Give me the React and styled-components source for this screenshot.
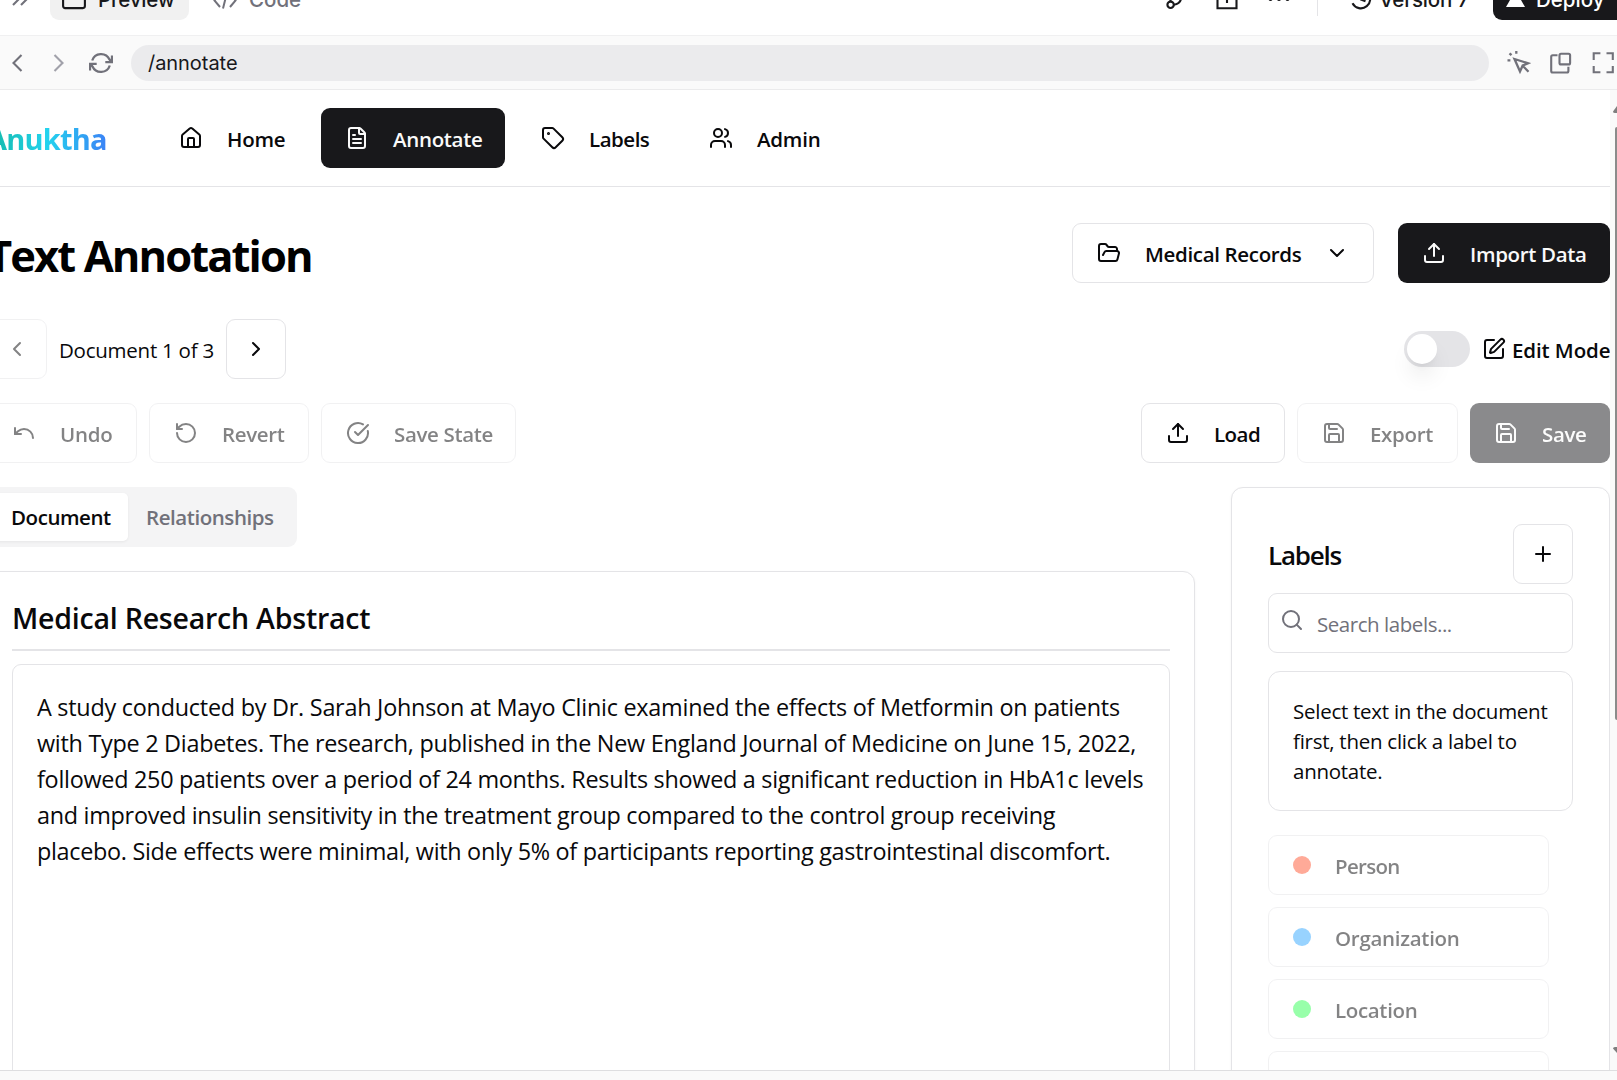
import React from "react";
import styled, { createGlobalStyle, css } from "styled-components";
import {
  House, FileText, Tag, Users, FolderOpen, ChevronDown, Upload, ChevronLeft, ChevronRight,
  SquarePen, Undo, RotateCcw, CircleCheckBig, Save, Plus, Search,
} from "lucide-react";

const ui = `"Open Sans", "Noto Sans", sans-serif`;
const chrome = `Inter, "Liberation Sans", sans-serif`;

const Global = createGlobalStyle`
  *, *::before, *::after { box-sizing: border-box; }
  body { margin: 0; background: #fff; color: #09090b; font-family: ${ui}; }
  button, input { font: inherit; color: inherit; margin: 0; }
  svg { display: block; flex: none; }
  h1, h2, h3, p { margin: 0; }
`;

const Window = styled.div`
  width: 1617px;
  height: 1080px;
  overflow: hidden;
  display: flex;
  flex-direction: column;
`;

/* Editor chrome */
const TopBar = styled.header`
  height: 36px;
  flex: none;
  overflow: hidden;
  border-bottom: 1px solid #f0f0f1;
  font-family: ${chrome};
`;
const TopBarInner = styled.div`
  height: 36px;
  margin-top: -16px;
  width: 1629px;
  padding-left: 5px;
  display: flex;
  align-items: center;
  font-size: 20.5px;
  font-weight: 500;
  color: #18181b;
`;
const ChromeText = styled.span`
  padding-bottom: 5px;
`;
const ViewTab = styled.div`
  height: 36px;
  width: ${(p) => p.$w}px;
  padding-left: ${(p) => p.$pad}px;
  display: flex;
  align-items: center;
  gap: 12px;
  border-radius: 9px;
  letter-spacing: ${(p) => p.$ls}px;
  background: ${(p) => (p.$on ? "#f1f1f1" : "transparent")};
  color: ${(p) => (p.$on ? "#18181b" : "#71717a")};
`;
const TopActions = styled.div`
  margin-left: auto;
  display: flex;
  align-items: center;
`;
const Action = styled.span`
  display: flex;
  width: ${(p) => p.$w}px;
  color: ${(p) => p.$color || "inherit"};
`;
const Rule = styled.span`
  width: 1px;
  height: 27px;
  background: #e4e4e7;
  margin-right: 31px;
`;
const Version = styled.span`
  display: flex;
  align-items: center;
  gap: 6px;
  width: 144px;
  letter-spacing: -0.15px;
`;
const Deploy = styled.button`
  width: 136px;
  height: 36px;
  padding: 0 0 0 12px;
  border: 0;
  border-radius: 9px;
  background: #18181b;
  color: #fff;
  display: flex;
  align-items: center;
  gap: 10px;
`;
const AddressBar = styled.div`
  height: 54px;
  flex: none;
  padding: 0 2px 0 5px;
  background: #fafafa;
  border-bottom: 1px solid #ebebec;
  display: flex;
  align-items: center;
  gap: 18px;
  color: #71717a;
`;
const Address = styled.div`
  width: 1358px;
  height: 36px;
  border-radius: 18px;
  padding-left: 17px;
  background: #ebebed;
  color: #18181b;
  font: 400 20px/36px ${chrome};
  letter-spacing: -0.05px;
`;

/* Previewed page */
const Viewport = styled.div`
  flex: 1;
  min-height: 0;
  display: flex;
`;
const Page = styled.div`
  width: 1610px;
  overflow: hidden;
  flex: none;
`;
const Track = styled.div`
  flex: 1;
  background: #fafafa;
  display: flex;
  flex-direction: column;
  align-items: flex-end;
  padding: 16px 0;
  overflow: hidden;
`;
const Thumb = styled.div`
  width: 2px;
  height: 593px;
  margin: 13px 0 auto;
  border-radius: 3px 0 0 3px;
  background: #8b8b8b;
`;
const NavBar = styled.nav`
  height: 97px;
  border-bottom: 1px solid #e4e4e7;
  display: flex;
  align-items: center;
`;
const Brand = styled.div`
  width: 168px;
  margin-left: -13px;
  padding-top: 1px;
  font-size: 29px;
  font-weight: 700;
  line-height: 42px;
  letter-spacing: -0.8px;
  & > span {
    background: linear-gradient(90deg, #14b8a6, #22d3ee 50%, #3b82f6);
    -webkit-background-clip: text;
    background-clip: text;
    color: transparent;
  }
`;
const Cluster = styled.div`
  display: flex;
  align-items: center;
  gap: ${(p) => p.$gap ?? 12}px;
`;
const Button = styled.button`
  height: 60px;
  width: ${(p) => p.$w}px;
  flex: none;
  padding: 0 0 0 ${(p) => (p.$kind === "outline" ? 24 : 23)}px;
  display: flex;
  align-items: center;
  gap: 24px;
  border: 1px solid transparent;
  border-radius: 9px;
  background: #fff;
  font-size: 20.5px;
  font-weight: 560;
  line-height: 30px;
  white-space: nowrap;
  opacity: ${(p) => (p.$dim ? 0.5 : 1)};
  ${(p) => p.$kind === "outline" && css`border-color: #e4e4e7;`}
  ${(p) => p.$kind === "solid" && css`background: #18181b; color: #fafafa;`}
  ${(p) => p.$square && css`padding: 0; justify-content: center;`}
`;
const Text = styled.span`
  padding-top: 1px;
  letter-spacing: ${(p) => (p.$ls || 0) - 0.34}px;
`;
const Main = styled.main`
  margin-left: -13px;
  width: 1623px;
  padding-top: 36px;
`;
const Row = styled.div`
  height: 60px;
  margin-bottom: ${(p) => p.$mb}px;
  display: flex;
  align-items: center;
  justify-content: space-between;
`;
const Title = styled.h1`
  font-size: 43.5px;
  font-weight: 700;
  line-height: 60px;
  letter-spacing: -1.9px;
  padding-top: 6px;
  white-space: nowrap;
  color: #000;
`;
const Plain = styled.span`
  font-size: 20.5px;
  line-height: 30px;
  padding-top: 1px;
  font-weight: ${(p) => p.$weight || 400};
  letter-spacing: ${(p) => p.$ls}px;
  width: ${(p) => p.$w}px;
  white-space: nowrap;
`;
const Switch = styled.div`
  width: 66px;
  height: 36px;
  border-radius: 18px;
  padding: 3px;
  background: #e4e4e7;
  margin-right: 12px;
  &::after {
    content: "";
    display: block;
    width: 30px;
    height: 30px;
    border-radius: 50%;
    background: #fff;
    box-shadow: 0 15px 22px -4px rgba(0, 0, 0, 0.1), 0 6px 9px -6px rgba(0, 0, 0, 0.1);
  }
`;
const EditLabel = styled.div`
  display: flex;
  align-items: center;
  gap: 6px;
`;
const Columns = styled.div`
  display: flex;
  gap: 36px;
  align-items: flex-start;
`;
const DocColumn = styled.section`
  width: 1208px;
`;
const Tabs = styled.div`
  width: 310px;
  height: 60px;
  padding: 6px;
  display: flex;
  border-radius: 9px;
  background: #f4f4f5;
  margin-bottom: 24px;
`;
const Tab = styled.div`
  height: 48px;
  padding: 6px 0 0 18px;
  width: ${(p) => (p.$on ? 135 : 163)}px;
  border-radius: 5px;
  font-size: 20.5px;
  line-height: 36px;
  font-weight: 560;
  letter-spacing: -0.44px;
  ${(p) => (p.$on
    ? css`background: #fff; color: #09090b; box-shadow: 0 1px 3px rgba(0, 0, 0, 0.06);`
    : css`color: #71717a;`)}
`;
const Card = styled.div`
  height: 720px;
  padding: ${(p) => p.$pad};
  border: 1px solid #e4e4e7;
  border-radius: 12px;
  background: #fff;
  box-shadow: 0 1px 3px rgba(0, 0, 0, 0.05);
`;
const DocTitle = styled.h2`
  height: 54px;
  font-size: 28.5px;
  font-weight: 600;
  line-height: 42px;
  letter-spacing: -0.22px;
  border-bottom: 2px solid #e4e4e7;
  margin-bottom: 13px;
`;
const DocBody = styled.div`
  height: 620px;
  padding: 24px;
  border: 1px solid #e4e4e7;
  border-radius: 9px;
`;
const Line = styled.p`
  font-size: 23.4px;
  line-height: 36px;
  white-space: nowrap;
  letter-spacing: ${(p) => p.$ls}px;
`;
const Side = styled.aside`
  width: 379px;
`;
const SideHead = styled.div`
  height: 60px;
  display: flex;
  justify-content: space-between;
  align-items: center;
  margin-bottom: 9px;
`;
const SideTitle = styled.h3`
  font-size: 26px;
  font-weight: 600;
  letter-spacing: -1.25px;
  line-height: 36px;
  padding-top: 1px;
`;
const SearchBox = styled.label`
  height: 60px;
  padding: 0 0 0 11px;
  display: flex;
  align-items: center;
  gap: 13px;
  border: 1px solid #e4e4e7;
  border-radius: 9px;
  color: #71717a;
  margin-bottom: 18px;
  & > svg { margin-bottom: 6px; }
`;
const SearchInput = styled.input`
  width: 220px;
  border: 0;
  padding: 1px 0 0;
  outline: none;
  background: transparent;
  font-size: 20.5px;
  line-height: 30px;
  letter-spacing: -0.45px;
  &::placeholder { color: #71717a; opacity: 1; }
`;
const Notice = styled.div`
  height: 140px;
  padding: 24px 0 0 24px;
  border: 1px solid #e4e4e7;
  border-radius: 12px;
  font-size: 20.5px;
  line-height: 30px;
  letter-spacing: -0.26px;
  margin-bottom: 24px;
`;
const LabelList = styled.div`
  display: flex;
  flex-direction: column;
  gap: 12px;
`;
const Dot = styled.span`
  width: 18px;
  height: 18px;
  border-radius: 50%;
  background: ${(p) => p.$c};
`;
const Footer = styled.footer`
  height: 10px;
  flex: none;
  border-top: 1px solid #dedee0;
  background: #fafafa;
`;

const Glyph = ({ w = 24, children, sw = 2.1, ...rest }) => (
  <svg width={w} height="24" viewBox={`0 0 ${w} 24`} fill="none" stroke="currentColor" strokeWidth={sw} {...rest}>
    {children}
  </svg>
);

const navItems = [
  { name: "Home", icon: House, w: 154, ls: 0.1 },
  { name: "Annotate", icon: FileText, w: 184, ls: 0.02, on: true },
  { name: "Labels", icon: Tag, w: 156, ls: -0.15 },
  { name: "Admin", icon: Users, w: 159, ls: 0.1 },
];

const lines = [
  ["A study conducted by Dr. Sarah Johnson at Mayo Clinic examined the effects of Metformin on patients", -0.248],
  ["with Type 2 Diabetes. The research, published in the New England Journal of Medicine on June 15, 2022,", -0.27],
  ["followed 250 patients over a period of 24 months. Results showed a significant reduction in HbA1c levels", -0.278],
  ["and improved insulin sensitivity in the treatment group compared to the control group receiving", -0.284],
  ["placebo. Side effects were minimal, with only 5% of participants reporting gastrointestinal discomfort.", -0.302],
];

const labels = [
  { name: "Person", c: "#ff5733", ls: -0.35 },
  { name: "Organization", c: "#33a8ff", ls: 0.05 },
  { name: "Location", c: "#33ff57", ls: 0 },
  { name: "", c: "transparent", ls: 0 },
];

function EditorChrome() {
  return (
    <>
      <TopBar>
        <TopBarInner>
          <Action $w={45} $color="#71717a">
            <Glyph><path d="M8 15l8-8M16 15l8-8" /></Glyph>
          </Action>
          <ViewTab $on $w={139} $pad={12} $ls={-0.2}>
            <Glyph><rect x="1.1" y="2" width="21.8" height="16.1" rx="2" /></Glyph>
            <ChromeText>Preview</ChromeText>
          </ViewTab>
          <ViewTab $w={130} $pad={24} $ls={0}>
            <Glyph sw={2}><path d="M7 4 1.500 10.500 7 17M17 4l5.500 6.500L17 17M14 2.500l-4 16" /></Glyph>
            <ChromeText>Code</ChromeText>
          </ViewTab>
          <TopActions>
            <Action $w={51}>
              <Glyph><circle cx="6.600" cy="14.800" r="3.200" /><circle cx="17" cy="5" r="3.200" /><path d="M6.500 11.500V2M9.800 14.700q7.200-1 7.200-7" /></Glyph>
            </Action>
            <Action $w={52}>
              <Glyph><path d="M7 5H2.500v13.200h19V5H17M12 13V1" /></Glyph>
            </Action>
            <Action $w={50}>
              <Glyph><g fill="currentColor" stroke="none"><circle cx="3.500" cy="9" r="2" /><circle cx="12" cy="9" r="2" /><circle cx="20.500" cy="9" r="2" /></g></Glyph>
            </Action>
            <Rule />
            <Version>
              <Glyph><path d="M3.500 13.300A9.400 9.400 0 1 0 3.500 4.500M12 3v6.500l4.500 1.800" /></Glyph>
              <ChromeText>Version 7</ChromeText>
            </Version>
            <Deploy>
              <Glyph w={21} stroke="none" fill="#fff"><path d="M10.500 0.500 20 17H1z" /></Glyph>
              <ChromeText>Deploy</ChromeText>
            </Deploy>
          </TopActions>
        </TopBarInner>
      </TopBar>
      <AddressBar>
        <Glyph><path d="M16.500 4 8.500 12l8 8" /></Glyph>
        <Glyph stroke="#a1a1aa"><path d="M7.500 4l8 8-8 8" /></Glyph>
        <Glyph sw={2.3}><path d="M3.200 9.500A9.300 9.300 0 0 1 20.500 8.500l2 2.800M23 4.500v6.700h-6.700M20.800 14.500A9.300 9.300 0 0 1 3.500 15.500l-2-2.800M1 19.500v-6.700h6.700" /></Glyph>
        <Address>/annotate</Address>
        <Glyph sw={2.3}><path d="M7.500 8l13.500 4.300-5.300 2.200-2.700 6zM15.500 14.500l6 6.200M9.300 0v2.700M2.500 2.300l2 1.900M0.500 9.300h2.900" /></Glyph>
        <Glyph><rect x="10.500" y="2.800" width="10.600" height="10.600" rx="1.500" /><path d="M8.500 4.300H3.700a1.500 1.500 0 0 0-1.500 1.500V20a1.500 1.500 0 0 0 1.500 1.500h14.200a1.500 1.500 0 0 0 1.500-1.500v-4.300" /></Glyph>
        <Glyph><path d="M2.700 9V2.300h6.700M15.500 2.300h6.300V9M21.800 15v6.300h-6.300M9.400 21.300H2.700V15" /></Glyph>
      </AddressBar>
    </>
  );
}

export default function App() {
  return (
    <Window>
      <Global />
      <EditorChrome />
      <Viewport>
        <Page>
          <NavBar>
            <Brand><span>Anuktha</span></Brand>
            <Cluster>
              {navItems.map(({ name, icon: Icon, w, ls, on }) => (
                <Button key={name} $w={w} $kind={on ? "solid" : "ghost"}>
                  <Icon size={24} /><Text $ls={ls}>{name}</Text>
                </Button>
              ))}
            </Cluster>
          </NavBar>
          <Main>
            <Row $mb={36}>
              <Title>Text Annotation</Title>
              <Cluster $gap={24}>
                <Button $kind="outline" $w={302}>
                  <FolderOpen size={24} /><Text>Medical Records</Text><ChevronDown size={24} />
                </Button>
                <Button $kind="solid" $w={212}><Upload size={24} /><Text>Import Data</Text></Button>
              </Cluster>
            </Row>
            <Row $mb={24}>
              <Cluster>
                <Button $kind="outline" $square $dim $w={60}><ChevronLeft size={24} /></Button>
                <Plain $ls={-0.25} $w={155}>Document 1 of 3</Plain>
                <Button $kind="outline" $square $w={60}><ChevronRight size={24} /></Button>
              </Cluster>
              <Cluster $gap={0}>
                <Switch />
                <EditLabel>
                  <SquarePen size={24} />
                  <Plain $weight={560} $ls={-0.1} $w={98}>Edit Mode</Plain>
                </EditLabel>
              </Cluster>
            </Row>
            <Row $mb={24}>
              <Cluster>
                <Button $kind="outline" $dim $w={150}><Undo size={24} /><Text $ls={0.1}>Undo</Text></Button>
                <Button $kind="outline" $dim $w={160}><RotateCcw size={24} /><Text>Revert</Text></Button>
                <Button $kind="outline" $dim $w={195}><CircleCheckBig size={24} /><Text>Save State</Text></Button>
              </Cluster>
              <Cluster>
                <Button $kind="outline" $w={144}><Upload size={24} /><Text $ls={-0.2}>Load</Text></Button>
                <Button $kind="outline" $dim $w={161}><Save size={24} /><Text>Export</Text></Button>
                <Button $kind="solid" $dim $w={140}><Save size={24} /><Text>Save</Text></Button>
              </Cluster>
            </Row>
            <Columns>
              <DocColumn>
                <Tabs>
                  <Tab $on>Document</Tab>
                  <Tab>Relationships</Tab>
                </Tabs>
                <Card $pad="25px 24px 0">
                  <DocTitle>Medical Research Abstract</DocTitle>
                  <DocBody>
                    {lines.map(([t, ls]) => <Line key={t} $ls={ls}>{t}</Line>)}
                  </DocBody>
                </Card>
              </DocColumn>
              <Side>
                <Card $pad="36px">
                  <SideHead>
                    <SideTitle>Labels</SideTitle>
                    <Button $kind="outline" $square $w={60}><Plus size={24} /></Button>
                  </SideHead>
                  <SearchBox>
                    <Search size={24} />
                    <SearchInput placeholder="Search labels..." />
                  </SearchBox>
                  <Notice>
                    Select text in the document<br />first, then click a label to<br />annotate.
                  </Notice>
                  <LabelList>
                    {labels.map(({ name, c, ls }, i) => (
                      <Button key={i} $kind="outline" $dim $w={281}>
                        <Dot $c={c} /><Text $ls={ls}>{name}</Text>
                      </Button>
                    ))}
                  </LabelList>
                </Card>
              </Side>
            </Columns>
          </Main>
        </Page>
        <Track>
          <svg width="4" height="8" viewBox="0 0 4 8"><path d="M4 0 0 5.500Q0 7 2 7H4z" fill="#7f7f7f" /></svg>
          <Thumb />
          <svg width="4" height="8" viewBox="0 0 4 8"><path d="M4 7 0 2.500Q0 1 2 1H4z" fill="#7f7f7f" /></svg>
        </Track>
      </Viewport>
      <Footer />
    </Window>
  );
}
